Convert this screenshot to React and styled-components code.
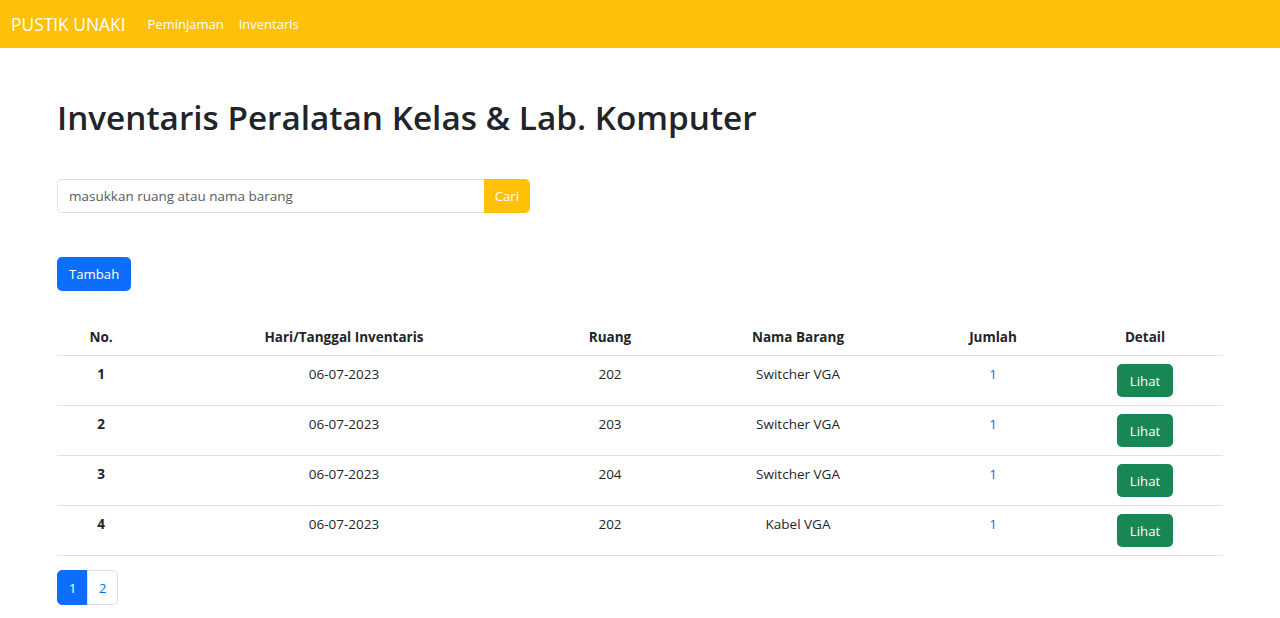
import styled, { createGlobalStyle } from "styled-components";

const GlobalStyle = createGlobalStyle`
  body {
    margin: 0;
    font-family: "Open Sans", "Noto Sans", sans-serif;
    color: #212529;
    background: #fff;
  }
`;

const Navbar = styled.nav`
  height: 48px;
  background-color: #ffc107;
  display: flex;
  align-items: center;
  padding: 0 11px;
  gap: 22px;
`;

const Brand = styled.span`
  color: #fff;
  font-size: 17.4px;
`;

const NavLinks = styled.div`
  display: flex;
  gap: 15px;

  a {
    color: #fff;
    font-size: 13px;
    text-decoration: none;
  }
`;

const Container = styled.main`
  padding: 45px 57px 0;
`;

const Title = styled.h1`
  font-size: 33.3px;
  font-weight: 600;
  line-height: 48px;
  margin: 0 0 38px;
`;

const SearchGroup = styled.form`
  display: flex;
  width: 473px;
  height: 34px;
  margin-bottom: 44px;
`;

const SearchInput = styled.input`
  flex: 1;
  border: 1px solid #dee2e6;
  border-right: none;
  border-radius: 5px 0 0 5px;
  padding: 0 11px;
  font-family: inherit;
  font-size: 13.5px;
  color: #212529;

  &::placeholder {
    color: #595c5f;
  }
`;

const Button = styled.button`
  border: none;
  height: ${(p) => p.$h || 34}px;
  padding: 0 ${(p) => p.$px || 12}px;
  font-family: inherit;
  font-size: 13.2px;
  color: #fff;
  background-color: ${(p) => p.$bg};
  border-radius: ${(p) => p.$radius || "5px"};
  cursor: pointer;
`;

const Table = styled.table`
  width: 100%;
  border-collapse: collapse;
  margin-top: 25px;
  font-size: 13.5px;

  th,
  td {
    text-align: center;
    vertical-align: top;
    padding: 8px;
    line-height: 20px;
    border-bottom: 1px solid #dee2e6;
  }

  thead th {
    padding: 11px 8px 8px;
  }
`;

const Count = styled.span`
  color: #0d6efd;
`;

const Pagination = styled.ul`
  display: flex;
  list-style: none;
  padding: 0;
  margin: 14px 0 0;
`;

const PageItem = styled.li`
  width: 31px;
  height: 35px;
  box-sizing: border-box;
  display: flex;
  align-items: center;
  justify-content: center;
  font-size: 13.5px;
  color: ${(p) => (p.$active ? "#fff" : "#0d6efd")};
  background: ${(p) => (p.$active ? "#0d6efd" : "#fff")};
  border: 1px solid ${(p) => (p.$active ? "#0d6efd" : "#dee2e6")};
  border-radius: ${(p) => (p.$active ? "5px 0 0 5px" : "0 5px 5px 0")};
  margin-left: ${(p) => (p.$active ? 0 : "-1px")};
`;

const rows = [
  { no: 1, date: "06-07-2023", room: "202", item: "Switcher VGA", qty: 1 },
  { no: 2, date: "06-07-2023", room: "203", item: "Switcher VGA", qty: 1 },
  { no: 3, date: "06-07-2023", room: "204", item: "Switcher VGA", qty: 1 },
  { no: 4, date: "06-07-2023", room: "202", item: "Kabel VGA", qty: 1 },
];

export default function App() {
  return (
    <>
      <GlobalStyle />
      <Navbar>
        <Brand>PUSTIK UNAKI</Brand>
        <NavLinks>
          <a href="#">Peminjaman</a>
          <a href="#">Inventaris</a>
        </NavLinks>
      </Navbar>
      <Container>
        <Title>Inventaris Peralatan Kelas &amp; Lab. Komputer</Title>
        <SearchGroup onSubmit={(e) => e.preventDefault()}>
          <SearchInput placeholder="masukkan ruang atau nama barang" />
          <Button $bg="#ffc107" $radius="0 5px 5px 0" $px={11}>
            Cari
          </Button>
        </SearchGroup>
        <Button $bg="#0d6efd">Tambah</Button>
        <Table>
          <colgroup>
            <col style={{ width: 88 }} />
            <col style={{ width: 398 }} />
            <col style={{ width: 134 }} />
            <col style={{ width: 242 }} />
            <col style={{ width: 148 }} />
            <col />
          </colgroup>
          <thead>
            <tr>
              <th>No.</th>
              <th>Hari/Tanggal Inventaris</th>
              <th>Ruang</th>
              <th>Nama Barang</th>
              <th>Jumlah</th>
              <th>Detail</th>
            </tr>
          </thead>
          <tbody>
            {rows.map((r) => (
              <tr key={r.no}>
                <th>{r.no}</th>
                <td>{r.date}</td>
                <td>{r.room}</td>
                <td>{r.item}</td>
                <td>
                  <Count>{r.qty}</Count>
                </td>
                <td>
                  <Button $bg="#198754" $h={33} $px={13}>
                    Lihat
                  </Button>
                </td>
              </tr>
            ))}
          </tbody>
        </Table>
        <Pagination>
          <PageItem $active>1</PageItem>
          <PageItem>2</PageItem>
        </Pagination>
      </Container>
    </>
  );
}
